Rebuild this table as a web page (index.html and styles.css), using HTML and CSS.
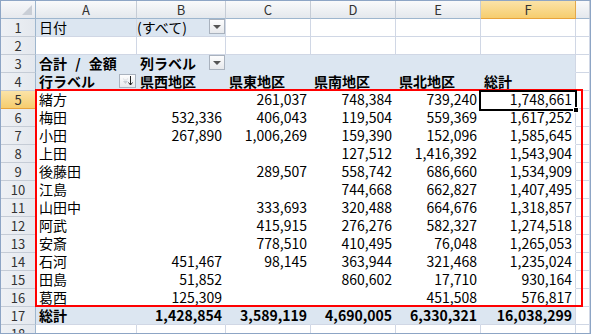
FILE: index.html
```html
<!DOCTYPE html>
<html lang="ja">
<head>
<meta charset="utf-8">
<link rel="stylesheet" href="styles.css">
</head>
<body>
<div class="frame">
  <div class="sheet">
    <div class="corner"><span class="tri"></span></div>
    <div class="ch">A</div><div class="ch">B</div><div class="ch">C</div><div class="ch">D</div><div class="ch">E</div><div class="ch ch-sel">F</div><div class="ch"></div>

    <div class="rh">1</div><div class="c pv">日付</div><div class="c pv has-btn tight">(すべて)<span class="btn"><span class="arrow"></span></span></div><div class="c"></div><div class="c"></div><div class="c"></div><div class="c"></div><div class="c"></div>

    <div class="rh">2</div><div class="c"></div><div class="c"></div><div class="c"></div><div class="c"></div><div class="c"></div><div class="c"></div><div class="c"></div>

    <div class="rh">3</div><div class="c pb b wide">合計 / 金額</div><div class="c pb b has-btn">列ラベル<span class="btn"><span class="arrow"></span></span></div><div class="c pb"></div><div class="c pb"></div><div class="c pb"></div><div class="c pb last"></div><div class="c"></div>

    <div class="rh">4</div><div class="c pb b has-btn">行ラベル<span class="btn sort"><svg width="15" height="12" viewBox="0 0 15 12"><path d="M3 6h5l-2.5 3z" fill="#c8ccd2"/><path d="M4 5h3M3 4h1M7 4h1" stroke="#d8dbe0" stroke-width="1"/><path d="M10.5 1v9" stroke="#222" stroke-width="1"/><path d="M8.5 7.5l2 2.5 2-2.5" stroke="#222" stroke-width="1" fill="none"/></svg></span></div><div class="c pb b"><u>県西地区</u></div><div class="c pb b"><u>県東地区</u></div><div class="c pb b"><u>県南地区</u></div><div class="c pb b"><u>県北地区</u></div><div class="c pb b last"><u>総計</u></div><div class="c"></div>

    <div class="rh rh-sel">5</div><div class="c pw">緒方</div><div class="c pw n"></div><div class="c pw n">261,037</div><div class="c pw n">748,384</div><div class="c pw n">739,240</div><div class="c pw n last">1,748,661</div><div class="c"></div>

    <div class="rh">6</div><div class="c pw">梅田</div><div class="c pw n">532,336</div><div class="c pw n">406,043</div><div class="c pw n">119,504</div><div class="c pw n">559,369</div><div class="c pw n last">1,617,252</div><div class="c"></div>

    <div class="rh">7</div><div class="c pw">小田</div><div class="c pw n">267,890</div><div class="c pw n">1,006,269</div><div class="c pw n">159,390</div><div class="c pw n">152,096</div><div class="c pw n last">1,585,645</div><div class="c"></div>

    <div class="rh">8</div><div class="c pw">上田</div><div class="c pw n"></div><div class="c pw n"></div><div class="c pw n">127,512</div><div class="c pw n">1,416,392</div><div class="c pw n last">1,543,904</div><div class="c"></div>

    <div class="rh">9</div><div class="c pw">後藤田</div><div class="c pw n"></div><div class="c pw n">289,507</div><div class="c pw n">558,742</div><div class="c pw n">686,660</div><div class="c pw n last">1,534,909</div><div class="c"></div>

    <div class="rh">10</div><div class="c pw">江島</div><div class="c pw n"></div><div class="c pw n"></div><div class="c pw n">744,668</div><div class="c pw n">662,827</div><div class="c pw n last">1,407,495</div><div class="c"></div>

    <div class="rh">11</div><div class="c pw">山田中</div><div class="c pw n"></div><div class="c pw n">333,693</div><div class="c pw n">320,488</div><div class="c pw n">664,676</div><div class="c pw n last">1,318,857</div><div class="c"></div>

    <div class="rh">12</div><div class="c pw">阿武</div><div class="c pw n"></div><div class="c pw n">415,915</div><div class="c pw n">276,276</div><div class="c pw n">582,327</div><div class="c pw n last">1,274,518</div><div class="c"></div>

    <div class="rh">13</div><div class="c pw">安斎</div><div class="c pw n"></div><div class="c pw n">778,510</div><div class="c pw n">410,495</div><div class="c pw n">76,048</div><div class="c pw n last">1,265,053</div><div class="c"></div>

    <div class="rh">14</div><div class="c pw">石河</div><div class="c pw n">451,467</div><div class="c pw n">98,145</div><div class="c pw n">363,944</div><div class="c pw n">321,468</div><div class="c pw n last">1,235,024</div><div class="c"></div>

    <div class="rh">15</div><div class="c pw">田島</div><div class="c pw n">51,852</div><div class="c pw n"></div><div class="c pw n">860,602</div><div class="c pw n">17,710</div><div class="c pw n last">930,164</div><div class="c"></div>

    <div class="rh">16</div><div class="c pw">葛西</div><div class="c pw n">125,309</div><div class="c pw n"></div><div class="c pw n"></div><div class="c pw n">451,508</div><div class="c pw n last">576,817</div><div class="c"></div>

    <div class="rh">17</div><div class="c pt b">総計</div><div class="c pt b n">1,428,854</div><div class="c pt b n">3,589,119</div><div class="c pt b n">4,690,005</div><div class="c pt b n">6,330,321</div><div class="c pt b n last">16,038,299</div><div class="c"></div>

    <div class="rh">18</div><div class="c"></div><div class="c"></div><div class="c"></div><div class="c"></div><div class="c"></div><div class="c"></div><div class="c"></div>

    <div class="redbox"></div>
    <div class="selbox"><span class="handle"></span></div>
  </div>
</div>
</body>
</html>
```

FILE: styles.css
```css
* {
  box-sizing: border-box;
  margin: 0;
  padding: 0;
}

html, body {
  width: 591px;
  height: 334px;
  overflow: hidden;
  background: #ffffff;
}

body {
  font-family: "Noto Sans CJK JP", "Noto Sans", sans-serif;
  color: #000;
}

.frame {
  width: 591px;
  height: 334px;
  border: 1px solid #8da5c5;
  overflow: hidden;
}

.sheet {
  position: relative;
  display: grid;
  grid-template-columns: 35px 101px 89px 85px 85px 85px 95px 1fr;
  grid-template-rows: 18px repeat(18, 18px);
}

.corner {
  position: relative;
  background: linear-gradient(#f7f8fa, #e6e9ee);
  border-right: 1px solid #9eb6ce;
  border-bottom: 1px solid #9eb6ce;
}

.tri {
  position: absolute;
  right: 3px;
  bottom: 3px;
  width: 0;
  height: 0;
  border-left: 10px solid transparent;
  border-bottom: 10px solid #c9ced6;
}

.ch {
  background: linear-gradient(#f9fafb, #e4e8ed);
  border-right: 1px solid #c5ccd6;
  border-bottom: 1px solid #9eb6ce;
  text-align: center;
  font-size: 13px;
  line-height: 17px;
  color: #333;
}

.ch-sel {
  background: linear-gradient(#fbe3a8, #f6cd6e);
  border-right-color: #e3a84a;
  border-bottom-color: #e8a33b;
}

.rh {
  background: linear-gradient(90deg, #eef1f5, #e4e8ee);
  border-right: 1px solid #9eb6ce;
  border-bottom: 1px solid #c5ccd6;
  text-align: center;
  font-size: 13px;
  line-height: 17px;
  color: #333;
}

.rh-sel {
  background: linear-gradient(#fbe3a8, #f6cd6e);
  border-right-color: #e3a84a;
  border-bottom-color: #e8a33b;
}

.c {
  position: relative;
  border-right: 1px solid #d0d7e5;
  border-bottom: 1px solid #d0d7e5;
  font-size: 14px;
  line-height: 17px;
  padding: 0 3px 0 3px;
  white-space: nowrap;
  overflow: visible;
}

.tight {
  padding-left: 0;
}

.wide {
  word-spacing: 5px;
}

.pv {
  background: #dce6f1;
}

.pb {
  background: #dce6f1;
  border-right-color: #dce6f1;
  border-bottom-color: #dce6f1;
}

.pw {
  background: #ffffff;
  border-right-color: #ffffff;
  border-bottom-color: #ffffff;
}

.pt {
  background: #dce6f1;
  border-right-color: #dce6f1;
}

.last {
  border-right-color: #d0d7e5;
}

.b {
  font-weight: bold;
}

.b u {
  text-decoration: underline;
  text-decoration-thickness: 1px;
  text-underline-offset: 2px;
}

.n {
  text-align: right;
}

.has-btn {
  z-index: 1;
}

.btn {
  position: absolute;
  right: 0;
  top: 0;
  width: 16px;
  height: 15px;
  border: 1px solid #a9b2be;
  background: linear-gradient(#fdfdfe, #e7e9ec);
  display: flex;
  align-items: center;
  justify-content: center;
}

.btn.sort {
  top: 1px;
  width: 17px;
  height: 14px;
}

.arrow {
  width: 0;
  height: 0;
  border-left: 4px solid transparent;
  border-right: 4px solid transparent;
  border-top: 4px solid #555;
  margin-top: 1px;
}

.redbox {
  position: absolute;
  left: 34px;
  top: 88px;
  width: 548px;
  height: 218px;
  border: 2px solid #ff0000;
  pointer-events: none;
  z-index: 2;
}

.selbox {
  position: absolute;
  left: 478px;
  top: 89px;
  width: 98px;
  height: 21px;
  border: 2px solid #000;
  z-index: 3;
}

.handle {
  position: absolute;
  right: -4px;
  bottom: -4px;
  width: 6px;
  height: 6px;
  background: #000;
  border: 1px solid #fff;
}
```
